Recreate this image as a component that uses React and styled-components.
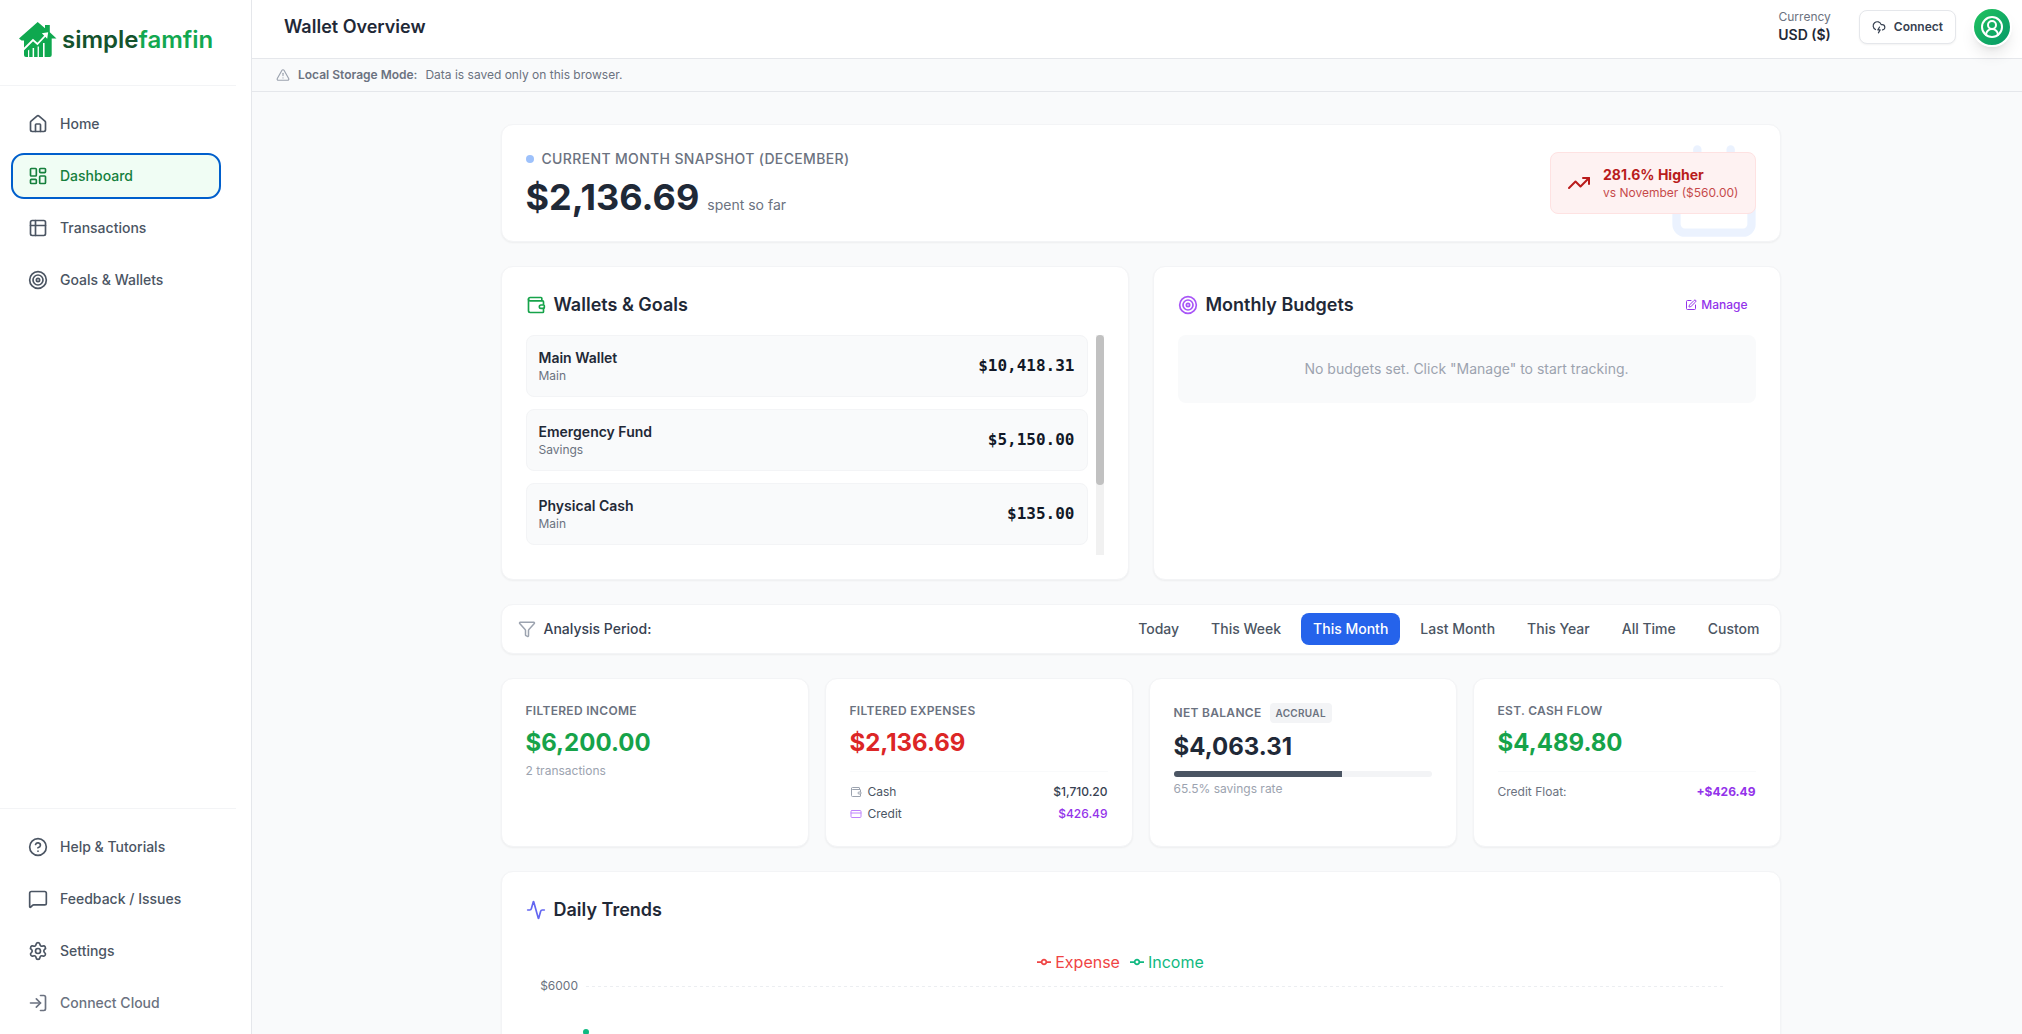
import styled, { createGlobalStyle, css } from 'styled-components';
import {
  Activity,
  Calendar,
  CircleQuestionMark,
  CircleUserRound,
  CloudLightning,
  CreditCard,
  Funnel,
  House,
  LayoutDashboard,
  LogIn,
  MessageSquare,
  Settings,
  SquarePen,
  Target,
  TrendingUp,
  TriangleAlert,
  Wallet,
} from 'lucide-react';

const COLOR = {
  INK: '#111827',
  TITLE: '#1f2937',
  STRONG: '#374151',
  TEXT: '#4b5563',
  MUTED: '#6b7280',
  FAINT: '#9ca3af',
  BORDER: '#e5e7eb',
  LINE: '#f3f4f6',
  SURFACE: '#f9fafb',
  GREEN: '#16a34a',
  RED: '#dc2626',
  PURPLE: '#9333ea',
};

function TableIcon({ size = 20 }) {
  return (
    <svg
      width={size}
      height={size}
      viewBox="0 0 24 24"
      fill="none"
      stroke="currentColor"
      strokeWidth="2"
      strokeLinecap="round"
      strokeLinejoin="round"
    >
      <rect x="3" y="3" width="18" height="18" rx="2" />
      <path d="M3 9h18M9 3v18" />
    </svg>
  );
}

function HouseLogo() {
  return (
    <svg width="38" height="36" viewBox="0 0 38 36">
      <path
        d="M18.7 0 26 6.2V3h4.8v7.3l6.7 6.2h-4.8V33a2 2 0 0 1-2 2H7a2 2 0 0 1-2-2V18.5H2.5L0 16.5z"
        fill="#0fa84f"
      />
      <path d="M9 28.5l1.2-1V35H9zM13.6 26h1.5v9h-1.5zM18.6 24.5h1.3V35h-1.3zM24 21h1.6v14H24z" fill="#fff" />
      <path d="M4.5 27.5 14 18l4.4 4 9-9.5" fill="none" stroke="#fff" strokeWidth="1.8" />
      <path d="M22.8 11.3l6.4-1-1 6.4z" fill="#fff" />
    </svg>
  );
}

const MAIN_LINKS = [
  { title: 'Home', icon: House },
  { title: 'Dashboard', icon: LayoutDashboard, active: true },
  { title: 'Transactions', icon: TableIcon },
  { title: 'Goals & Wallets', icon: Target },
];

const FOOTER_LINKS = [
  { title: 'Help & Tutorials', icon: CircleQuestionMark },
  { title: 'Feedback / Issues', icon: MessageSquare },
  { title: 'Settings', icon: Settings },
  { title: 'Connect Cloud', icon: LogIn, muted: true },
];

const WALLETS = [
  { name: 'Main Wallet', type: 'Main', amount: '$10,418.31' },
  { name: 'Emergency Fund', type: 'Savings', amount: '$5,150.00' },
  { name: 'Physical Cash', type: 'Main', amount: '$135.00' },
];

const PERIODS = ['Today', 'This Week', 'This Month', 'Last Month', 'This Year', 'All Time', 'Custom'];

function NavLinks({ items }) {
  return items.map(({ title, icon: Icon, active, muted }) => (
    <NavItem key={title} href="#" $active={active} $muted={muted} aria-current={active ? 'page' : undefined}>
      <Icon size={20} />
      {title}
    </NavItem>
  ));
}

function Sidebar() {
  return (
    <SidebarContainer>
      <Brand href="#">
        <HouseLogo />
        <BrandName>
          simple<BrandAccent>famfin</BrandAccent>
        </BrandName>
      </Brand>
      <MainNav>
        <NavLinks items={MAIN_LINKS} />
      </MainNav>
      <FooterNav>
        <NavLinks items={FOOTER_LINKS} />
      </FooterNav>
    </SidebarContainer>
  );
}

function Header() {
  return (
    <HeaderContainer>
      <PageTitle>Wallet Overview</PageTitle>
      <Currency>
        <Caption>Currency</Caption>
        <CurrencyValue>USD ($)</CurrencyValue>
      </Currency>
      <HeaderActions>
        <ConnectButton type="button">
          <CloudLightning size={14} />
          Connect
        </ConnectButton>
        <AvatarButton type="button" aria-label="Account">
          <CircleUserRound size={24} />
        </AvatarButton>
      </HeaderActions>
    </HeaderContainer>
  );
}

function Snapshot() {
  return (
    <SnapshotCard>
      <Watermark>
        <Calendar size={100} />
      </Watermark>
      <div>
        <SnapshotLabel>
          <Dot />
          Current Month Snapshot (December)
        </SnapshotLabel>
        <SnapshotRow>
          <SnapshotValue>$2,136.69</SnapshotValue>
          <SnapshotHint>spent so far</SnapshotHint>
        </SnapshotRow>
      </div>
      <TrendBadge>
        <TrendingUp size={24} />
        <div>
          <TrendTitle>281.6% Higher</TrendTitle>
          <TrendText>vs November ($560.00)</TrendText>
        </div>
      </TrendBadge>
    </SnapshotCard>
  );
}

function Wallets() {
  return (
    <Card>
      <CardHeader>
        <CardTitle $icon={COLOR.GREEN}>
          <Wallet size={20} />
          Wallets &amp; Goals
        </CardTitle>
      </CardHeader>
      <WalletScroll>
        <WalletList>
          {WALLETS.map(({ name, type, amount }) => (
            <WalletItem key={name}>
              <div>
                <WalletName>{name}</WalletName>
                <Caption>{type}</Caption>
              </div>
              <WalletAmount>{amount}</WalletAmount>
            </WalletItem>
          ))}
        </WalletList>
        <ScrollTrack>
          <ScrollThumb />
        </ScrollTrack>
      </WalletScroll>
    </Card>
  );
}

function Budgets() {
  return (
    <Card>
      <CardHeader>
        <CardTitle $icon="#a855f7">
          <Target size={20} />
          Monthly Budgets
        </CardTitle>
        <ManageButton type="button">
          <SquarePen size={12} />
          Manage
        </ManageButton>
      </CardHeader>
      <EmptyState>No budgets set. Click "Manage" to start tracking.</EmptyState>
    </Card>
  );
}

function PeriodFilter() {
  return (
    <PeriodCard>
      <PeriodLabel>
        <Funnel size={18} />
        Analysis Period:
      </PeriodLabel>
      <PeriodOptions>
        {PERIODS.map((period) => (
          <PeriodButton key={period} type="button" $active={period === 'This Month'}>
            {period}
          </PeriodButton>
        ))}
      </PeriodOptions>
    </PeriodCard>
  );
}

function Stats() {
  const savingsRate = 65.5;
  return (
    <StatGrid>
      <Card>
        <StatLabel>Filtered Income</StatLabel>
        <StatValue $color={COLOR.GREEN}>$6,200.00</StatValue>
        <StatNote>2 transactions</StatNote>
      </Card>
      <Card>
        <StatLabel>Filtered Expenses</StatLabel>
        <StatValue $color={COLOR.RED}>$2,136.69</StatValue>
        <Breakdown>
          <BreakdownRow>
            <BreakdownName $icon={COLOR.FAINT}>
              <Wallet size={12} />
              Cash
            </BreakdownName>
            <BreakdownValue>$1,710.20</BreakdownValue>
          </BreakdownRow>
          <BreakdownRow>
            <BreakdownName $icon="#c084fc">
              <CreditCard size={12} />
              Credit
            </BreakdownName>
            <BreakdownValue $color={COLOR.PURPLE}>$426.49</BreakdownValue>
          </BreakdownRow>
        </Breakdown>
      </Card>
      <Card>
        <StatLabel>
          Net Balance
          <Tag>Accrual</Tag>
        </StatLabel>
        <StatValue>$4,063.31</StatValue>
        <ProgressTrack>
          <ProgressFill style={{ width: `${savingsRate}%` }} />
        </ProgressTrack>
        <StatNote>{savingsRate}% savings rate</StatNote>
      </Card>
      <Card>
        <StatLabel>Est. Cash Flow</StatLabel>
        <StatValue $color={COLOR.GREEN}>$4,489.80</StatValue>
        <Breakdown>
          <BreakdownRow>
            <BreakdownName $color={COLOR.MUTED}>Credit Float:</BreakdownName>
            <BreakdownValue $color={COLOR.PURPLE} $bold>
              +$426.49
            </BreakdownValue>
          </BreakdownRow>
        </Breakdown>
      </Card>
    </StatGrid>
  );
}

function LegendIcon() {
  return (
    <svg width="14" height="14" viewBox="0 0 32 32" fill="none" stroke="currentColor" strokeWidth="4">
      <path d="M0 16h10.67A5.33 5.33 0 1 1 21.33 16H32M21.33 16A5.33 5.33 0 1 1 10.67 16" />
    </svg>
  );
}

function DailyTrends() {
  return (
    <Card>
      <CardTitle $icon="#6366f1">
        <Activity size={20} />
        Daily Trends
      </CardTitle>
      <Chart>
        <Legend>
          <LegendItem $color="#ef4444">
            <LegendIcon />
            Expense
          </LegendItem>
          <LegendItem $color="#10b981">
            <LegendIcon />
            Income
          </LegendItem>
        </Legend>
        <svg width="100%" height="300">
          <Tick x="52" y="16" textAnchor="end">
            $6000
          </Tick>
          {[12, 81, 150, 219, 288].map((y) => (
            <GridLine key={y} x1="60" x2="100%" y1={y} y2={y} />
          ))}
          <path d="M60 58 98 288" stroke="#10b981" strokeWidth="2" />
          <circle cx="60" cy="58" r="3" fill="#10b981" />
        </svg>
      </Chart>
    </Card>
  );
}

export default function App() {
  return (
    <Shell>
      <GlobalStyle />
      <Sidebar />
      <Main>
        <Header />
        <Notice>
          <TriangleAlert size={14} />
          <strong>Local Storage Mode:</strong>
          <span>Data is saved only on this browser.</span>
        </Notice>
        <Content>
          <Sections>
            <Snapshot />
            <Columns>
              <Wallets />
              <Budgets />
            </Columns>
            <PeriodFilter />
            <Stats />
            <DailyTrends />
          </Sections>
        </Content>
      </Main>
    </Shell>
  );
}

const GlobalStyle = createGlobalStyle`
  *, *::before, *::after {
    box-sizing: border-box;
  }
  body {
    margin: 0;
    font-family: Inter, 'Liberation Sans', sans-serif;
    font-size: 14px;
    line-height: 20px;
    color: ${COLOR.TITLE};
    background: ${COLOR.SURFACE};
  }
  h1, h2, p, ul, dl, dd {
    margin: 0;
    padding: 0;
  }
  button {
    font: inherit;
    cursor: pointer;
  }
  a {
    text-decoration: none;
  }
  svg {
    flex-shrink: 0;
    display: block;
  }
`;

const Shell = styled.div`
  display: flex;
  height: 100vh;
`;

const SidebarContainer = styled.aside`
  display: flex;
  flex-direction: column;
  flex-shrink: 0;
  width: 252px;
  padding-right: 15px;
  background: #fff;
  border-right: 1px solid ${COLOR.BORDER};
`;
const Brand = styled.a`
  display: flex;
  align-items: center;
  gap: 5px;
  padding: 22px 19px 27px;
  border-bottom: 1px solid ${COLOR.LINE};
`;
const BrandName = styled.span`
  font-size: 24px;
  line-height: 36px;
  font-weight: 600;
  color: #14532d;
`;
const BrandAccent = styled.span`
  color: #12a850;
`;
const MainNav = styled.nav`
  display: flex;
  flex-direction: column;
  flex: 1;
  gap: 8px;
  padding: 16px 16px 16px 12px;
`;
const FooterNav = styled(MainNav)`
  flex: none;
  padding-bottom: 9px;
  border-top: 1px solid ${COLOR.LINE};
`;
const NavItem = styled.a`
  display: flex;
  align-items: center;
  gap: 12px;
  padding: 12px 16px;
  font-weight: 500;
  border-radius: 12px;
  color: ${({ $muted }) => ($muted ? COLOR.MUTED : COLOR.TEXT)};
  ${({ $active }) =>
    $active &&
    css`
      color: #15803d;
      background: #f0fdf4;
      outline: 2px solid #005fcc;
      outline-offset: -1px;
    `}
`;

const Main = styled.main`
  flex: 1;
  min-width: 0;
  overflow-y: auto;
  scrollbar-width: none;
`;
const HeaderContainer = styled.header`
  display: flex;
  align-items: center;
  padding: 7px 10px 11px 32px;
  background: #fff;
  border-bottom: 1px solid ${COLOR.BORDER};
`;
const PageTitle = styled.h1`
  flex: 1;
  font-size: 18px;
  line-height: 28px;
  font-weight: 600;
`;
const Caption = styled.p`
  font-size: 12px;
  line-height: 16px;
  color: ${COLOR.MUTED};
`;
const Currency = styled.div`
  margin-right: 28px;
  text-align: right;
`;
const CurrencyValue = styled.p`
  font-weight: 600;
`;
const HeaderActions = styled.div`
  display: flex;
  align-items: center;
  gap: 16px;
`;
const ConnectButton = styled.button`
  display: flex;
  align-items: center;
  gap: 8px;
  padding: 8px 12px;
  font-size: 12px;
  line-height: 16px;
  font-weight: 600;
  color: ${COLOR.STRONG};
  background: #fff;
  border: 1px solid ${COLOR.BORDER};
  border-radius: 8px;
  box-shadow: 0 1px 2px rgba(0, 0, 0, 0.05);
`;
const AvatarButton = styled.button`
  display: flex;
  align-items: center;
  justify-content: center;
  width: 40px;
  height: 40px;
  padding: 0;
  color: #fff;
  background: linear-gradient(135deg, #22c55e, #059669) border-box;
  border: 2px solid #fff;
  border-radius: 50%;
  box-shadow: 0 10px 15px -3px rgba(0, 0, 0, 0.1), 0 4px 6px -4px rgba(0, 0, 0, 0.1);
`;
const Notice = styled.div`
  display: flex;
  align-items: center;
  gap: 8px;
  padding: 8px 24px;
  font-size: 12px;
  line-height: 16px;
  color: ${COLOR.MUTED};
  border-bottom: 1px solid ${COLOR.BORDER};

  strong {
    font-weight: 600;
  }
  svg {
    color: ${COLOR.FAINT};
  }
`;
const Content = styled.div`
  padding: 32px 25px 32px 32px;
`;
const Sections = styled.div`
  display: flex;
  flex-direction: column;
  gap: 24px;
  max-width: 1280px;
  margin: 0 auto;
`;

const Card = styled.section`
  padding: 24px;
  background: #fff;
  border: 1px solid ${COLOR.LINE};
  border-radius: 12px;
  box-shadow: 0 1px 2px rgba(0, 0, 0, 0.05);
`;
const CardHeader = styled.div`
  display: flex;
  align-items: center;
  justify-content: space-between;
  margin-bottom: 16px;
`;
const CardTitle = styled.h2`
  display: flex;
  align-items: center;
  gap: 8px;
  font-size: 18px;
  line-height: 28px;
  font-weight: 600;

  svg {
    color: ${({ $icon }) => $icon};
  }
`;

const SnapshotCard = styled(Card)`
  position: relative;
  display: flex;
  align-items: center;
  justify-content: space-between;
  overflow: hidden;
`;
const Watermark = styled.div`
  position: absolute;
  top: 16px;
  right: 16px;
  color: #3b82f6;
  opacity: 0.1;
`;
const SnapshotLabel = styled.h2`
  display: flex;
  align-items: center;
  gap: 8px;
  margin-bottom: 8px;
  font-size: 14px;
  line-height: 20px;
  font-weight: 500;
  letter-spacing: 0.025em;
  text-transform: uppercase;
  color: ${COLOR.MUTED};
`;
const Dot = styled.span`
  width: 8px;
  height: 8px;
  border-radius: 50%;
  background: #9dc1fb;
`;
const SnapshotRow = styled.div`
  display: flex;
  align-items: baseline;
  gap: 8px;
`;
const SnapshotValue = styled.span`
  font-size: 36px;
  line-height: 40px;
  font-weight: 700;
`;
const SnapshotHint = styled.span`
  color: ${COLOR.MUTED};
`;
const TrendBadge = styled.div`
  position: relative;
  display: flex;
  align-items: center;
  gap: 12px;
  padding: 12px 16px;
  color: #b91c1c;
  background: #fef2f2;
  border: 1px solid #fee2e2;
  border-radius: 8px;
`;
const TrendTitle = styled.p`
  font-weight: 700;
`;
const TrendText = styled.p`
  font-size: 12px;
  line-height: 16px;
  opacity: 0.8;
`;

const Columns = styled.div`
  display: grid;
  grid-template-columns: 1fr 1fr;
  gap: 24px;
`;
const WalletScroll = styled.div`
  display: flex;
  gap: 8px;
  height: 220px;
`;
const WalletList = styled.ul`
  display: flex;
  flex-direction: column;
  flex: 1;
  gap: 12px;
  list-style: none;
`;
const WalletItem = styled.li`
  display: flex;
  align-items: center;
  justify-content: space-between;
  padding: 12px;
  background: ${COLOR.SURFACE};
  border: 1px solid ${COLOR.LINE};
  border-radius: 8px;
`;
const WalletName = styled.p`
  font-weight: 600;
`;
const WalletAmount = styled.span`
  font-family: 'DejaVu Sans Mono', 'Liberation Mono', monospace;
  font-size: 16px;
  line-height: 24px;
  font-weight: 700;
  color: ${COLOR.INK};
`;
const ScrollTrack = styled.div`
  width: 8px;
  background: #f1f1f1;
`;
const ScrollThumb = styled.div`
  height: 68%;
  background: #c1c1c1;
  border-radius: 4px;
`;
const ManageButton = styled.button`
  display: flex;
  align-items: center;
  gap: 4px;
  padding: 4px 8px;
  font-size: 12px;
  line-height: 16px;
  font-weight: 500;
  color: ${COLOR.PURPLE};
  background: none;
  border: 0;
`;
const EmptyState = styled.p`
  padding: 24px;
  text-align: center;
  color: ${COLOR.FAINT};
  background: ${COLOR.SURFACE};
  border-radius: 8px;
`;

const PeriodCard = styled(Card)`
  display: flex;
  align-items: center;
  justify-content: space-between;
  padding: 8px 8px 8px 16px;
`;
const PeriodLabel = styled.div`
  display: flex;
  align-items: center;
  gap: 8px;
  font-weight: 500;
  color: ${COLOR.STRONG};

  svg {
    color: ${COLOR.FAINT};
  }
`;
const PeriodOptions = styled.div`
  display: flex;
  gap: 8px;
`;
const PeriodButton = styled.button`
  padding: 6px 12px;
  font-weight: 500;
  color: ${({ $active }) => ($active ? '#fff' : COLOR.TEXT)};
  background: ${({ $active }) => ($active ? '#2563eb' : 'none')};
  border: 0;
  border-radius: 8px;
`;

const StatGrid = styled.div`
  display: grid;
  grid-template-columns: repeat(4, 1fr);
  gap: 16px;
`;
const StatLabel = styled.h2`
  display: flex;
  align-items: center;
  gap: 8px;
  margin-bottom: 8px;
  font-size: 12px;
  line-height: 16px;
  font-weight: 600;
  letter-spacing: 0.025em;
  text-transform: uppercase;
  color: ${COLOR.MUTED};
`;
const Tag = styled.span`
  padding: 2px 6px;
  font-size: 10px;
  background: ${COLOR.LINE};
  border-radius: 4px;
`;
const StatValue = styled.p`
  font-size: 24px;
  line-height: 32px;
  font-weight: 700;
  color: ${({ $color }) => $color || COLOR.TITLE};
`;
const StatNote = styled.p`
  margin-top: 4px;
  font-size: 12px;
  line-height: 16px;
  color: ${COLOR.FAINT};
`;
const Breakdown = styled.dl`
  display: flex;
  flex-direction: column;
  gap: 6px;
  margin-top: 12px;
  padding-top: 12px;
  border-top: 1px solid ${COLOR.SURFACE};
`;
const BreakdownRow = styled.div`
  display: flex;
  justify-content: space-between;
  font-size: 12px;
  line-height: 16px;
`;
const BreakdownName = styled.dt`
  display: flex;
  align-items: center;
  gap: 6px;
  color: ${({ $color }) => $color || COLOR.TEXT};

  svg {
    color: ${({ $icon }) => $icon};
  }
`;
const BreakdownValue = styled.dd`
  font-weight: ${({ $bold }) => ($bold ? 700 : 500)};
  color: ${({ $color }) => $color || COLOR.STRONG};
`;
const ProgressTrack = styled.div`
  height: 6px;
  margin-top: 8px;
  overflow: hidden;
  background: ${COLOR.LINE};
  border-radius: 3px;
`;
const ProgressFill = styled.div`
  height: 100%;
  background: ${COLOR.TEXT};
`;

const Chart = styled.div`
  margin-top: 26px;
  padding-right: 30px;
`;
const Legend = styled.ul`
  display: flex;
  justify-content: center;
  list-style: none;
`;
const LegendItem = styled.li`
  display: flex;
  align-items: center;
  gap: 4px;
  margin-right: 10px;
  font-size: 16px;
  line-height: 24px;
  color: ${({ $color }) => $color};
`;
const Tick = styled.text`
  font-size: 12px;
  fill: ${COLOR.MUTED};
`;
const GridLine = styled.line`
  stroke: #eceef1;
  stroke-dasharray: 3 3;
  shape-rendering: crispEdges;
`;
